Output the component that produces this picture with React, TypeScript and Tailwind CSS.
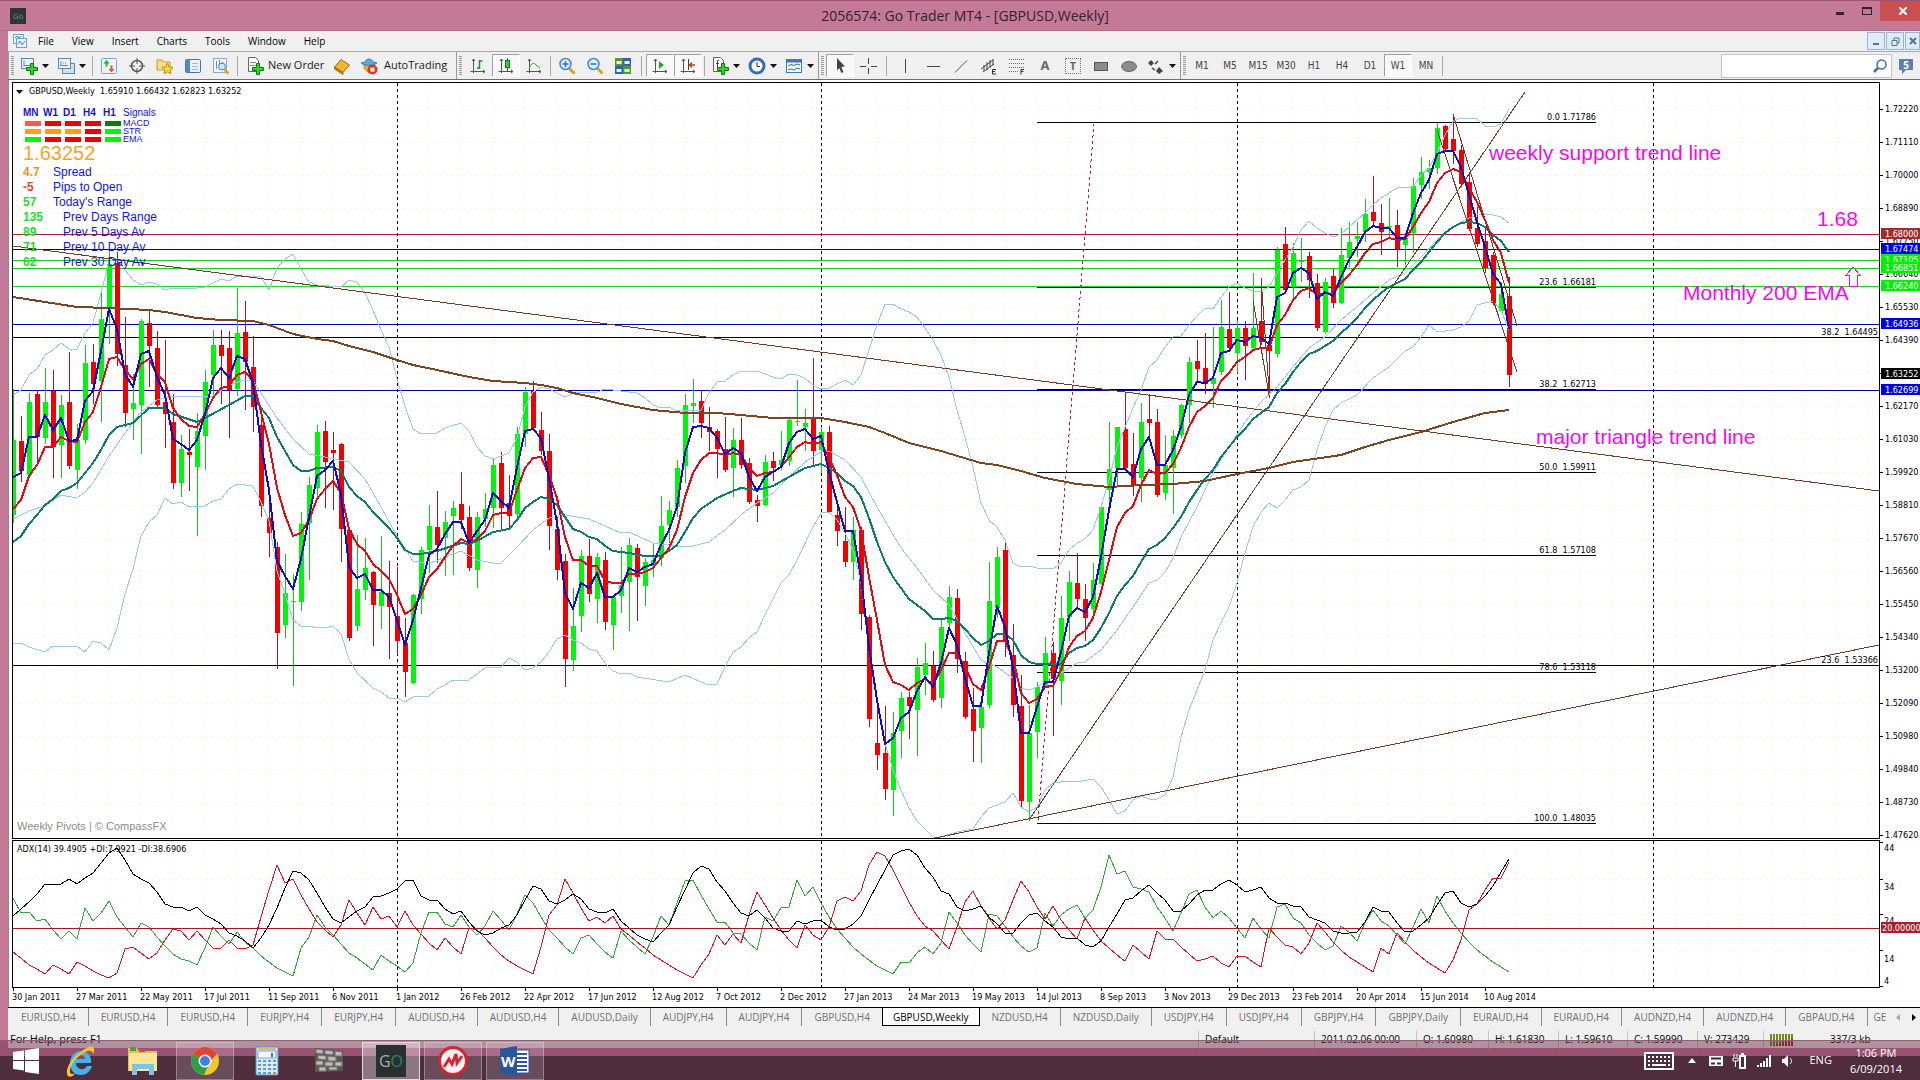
import type { ReactNode } from 'react'

const FONT_UI = "font-['Open_Sans','Noto_Sans',sans-serif]"
const FONT_CHART = "font-['DejaVu_Sans_Condensed','DejaVu_Sans',sans-serif]"
const FONT_LABEL = "font-['Liberation_Sans',Arial,sans-serif]"

// Bars are 8px apart and the first one sits on the left frame
const BAR_START = 13
const BAR_STEP = 8
const barX = (i: number) => BAR_START + i * BAR_STEP

// high, body top, body bottom, low, 1 = bullish
type Candle = [number, number, number, number, number]

const CANDLES: Candle[] = [
  [389, 440, 515, 523, 1], [416, 441, 471, 482, 0], [393, 402, 475, 476, 1], [390, 394, 437, 461, 0],
  [368, 402, 438, 444, 1], [370, 391, 447, 478, 0], [395, 405, 445, 478, 1], [352, 402, 466, 469, 0],
  [424, 440, 470, 489, 1], [345, 363, 440, 444, 1], [344, 362, 384, 404, 0], [293, 319, 381, 422, 1],
  [249, 264, 308, 344, 1], [252, 263, 354, 366, 0], [317, 365, 413, 427, 0], [374, 403, 409, 440, 1],
  [319, 321, 405, 454, 1], [310, 323, 346, 387, 0], [331, 348, 405, 407, 0], [340, 402, 414, 448, 0],
  [394, 422, 483, 489, 0], [435, 449, 483, 497, 1], [429, 452, 455, 491, 0], [413, 431, 467, 536, 1],
  [370, 382, 436, 470, 1], [330, 345, 375, 395, 1], [330, 345, 356, 404, 0], [331, 348, 390, 438, 0],
  [288, 333, 389, 396, 1], [301, 332, 362, 410, 0], [336, 367, 407, 432, 0], [408, 425, 506, 517, 0],
  [502, 518, 533, 557, 0], [542, 547, 633, 669, 0], [554, 593, 625, 638, 1], [574, 601, 602, 686, 1],
  [512, 524, 602, 611, 1], [477, 485, 523, 580, 1], [425, 432, 488, 498, 1], [421, 431, 462, 508, 0],
  [432, 450, 453, 510, 0], [443, 444, 529, 562, 0], [530, 530, 638, 641, 0], [535, 589, 626, 631, 1],
  [538, 568, 590, 600, 1], [571, 572, 605, 646, 0], [536, 592, 606, 629, 1], [561, 593, 607, 659, 0],
  [567, 616, 641, 655, 0], [618, 643, 672, 697, 0], [594, 595, 683, 684, 1], [547, 550, 599, 614, 1],
  [505, 526, 550, 573, 1], [491, 527, 545, 563, 0], [511, 522, 538, 576, 1], [501, 508, 516, 575, 1],
  [472, 504, 520, 529, 0], [506, 517, 568, 571, 0], [512, 517, 570, 588, 1], [493, 509, 519, 527, 1],
  [459, 465, 508, 528, 1], [452, 463, 508, 530, 0], [475, 503, 516, 529, 0], [427, 434, 514, 518, 1],
  [387, 392, 434, 447, 1], [381, 391, 428, 429, 0], [412, 430, 451, 455, 0], [434, 451, 526, 550, 0],
  [517, 529, 570, 580, 0], [554, 561, 659, 687, 0], [588, 626, 660, 671, 1], [550, 556, 616, 632, 1],
  [539, 556, 594, 602, 0], [553, 557, 599, 623, 1], [552, 560, 622, 630, 0], [597, 597, 625, 650, 1],
  [547, 585, 596, 613, 1], [538, 545, 582, 631, 1], [544, 548, 577, 621, 0], [558, 562, 586, 606, 1],
  [544, 560, 566, 577, 1], [496, 526, 558, 566, 1], [501, 510, 525, 543, 1], [460, 468, 507, 517, 1],
  [394, 405, 466, 483, 1], [379, 403, 406, 423, 1], [391, 401, 423, 438, 0], [407, 427, 432, 451, 0],
  [429, 431, 449, 478, 0], [417, 449, 470, 472, 0], [428, 440, 468, 497, 1], [418, 440, 465, 469, 0],
  [458, 463, 502, 504, 0], [495, 500, 506, 522, 0], [455, 462, 505, 506, 1], [452, 461, 468, 481, 0],
  [431, 460, 465, 470, 1], [418, 420, 461, 466, 1], [380, 421, 422, 426, 1], [409, 423, 427, 451, 1],
  [358, 418, 451, 466, 0], [427, 432, 450, 473, 1], [426, 432, 512, 513, 0], [500, 515, 531, 546, 0],
  [507, 541, 562, 567, 0], [517, 530, 562, 580, 1], [527, 530, 614, 630, 0], [615, 617, 719, 727, 0],
  [707, 743, 755, 770, 0], [706, 753, 789, 800, 0], [712, 733, 790, 816, 1], [692, 698, 731, 758, 1],
  [692, 697, 706, 739, 0], [658, 667, 710, 756, 1], [643, 663, 675, 695, 1], [651, 666, 700, 702, 0],
  [620, 627, 698, 708, 1], [586, 597, 623, 628, 1], [589, 598, 659, 673, 0], [652, 661, 717, 719, 0],
  [688, 709, 731, 762, 0], [706, 707, 728, 763, 1], [562, 601, 705, 708, 1], [547, 557, 608, 618, 1],
  [543, 550, 642, 657, 0], [624, 655, 705, 717, 0], [675, 706, 801, 808, 0], [705, 733, 802, 821, 1],
  [682, 687, 732, 758, 1], [637, 653, 686, 688, 1], [642, 653, 679, 736, 0], [596, 618, 681, 705, 1],
  [571, 582, 617, 641, 1], [553, 583, 599, 607, 0], [584, 599, 618, 641, 0], [563, 580, 609, 614, 1],
  [504, 507, 584, 585, 1], [422, 469, 490, 507, 1], [427, 427, 468, 485, 1], [392, 429, 468, 470, 0],
  [433, 464, 486, 496, 0], [403, 422, 478, 502, 1], [394, 419, 423, 438, 0], [409, 422, 495, 497, 0],
  [435, 465, 493, 500, 1], [430, 436, 468, 514, 1], [404, 405, 435, 438, 1], [357, 362, 405, 423, 1],
  [340, 361, 369, 383, 0], [333, 368, 384, 394, 0], [327, 378, 384, 408, 1], [300, 327, 372, 375, 1],
  [292, 329, 348, 352, 0], [320, 328, 353, 373, 1], [321, 328, 346, 380, 0], [273, 328, 348, 349, 1],
  [287, 321, 342, 345, 0], [340, 345, 351, 398, 0], [247, 250, 354, 357, 1], [227, 244, 290, 293, 0],
  [243, 253, 287, 298, 1], [238, 261, 262, 282, 1], [252, 256, 280, 298, 0], [274, 283, 328, 331, 0],
  [278, 282, 332, 334, 1], [269, 276, 303, 308, 0], [228, 255, 303, 304, 1], [222, 242, 258, 267, 1],
  [222, 236, 239, 257, 1], [199, 214, 232, 242, 1], [176, 212, 221, 225, 0], [204, 223, 232, 255, 0],
  [198, 226, 227, 238, 1], [210, 225, 249, 267, 0], [233, 238, 245, 265, 1], [178, 186, 233, 253, 1],
  [157, 172, 185, 199, 1], [160, 168, 172, 189, 1], [123, 128, 168, 174, 1], [125, 126, 149, 151, 0],
  [116, 139, 151, 164, 0], [145, 150, 184, 187, 0], [172, 182, 229, 231, 0], [207, 228, 244, 247, 0],
  [227, 241, 268, 273, 0], [252, 255, 303, 305, 0], [287, 294, 311, 313, 1], [277, 296, 375, 387, 0],
]

// One value per bar
const EMA_FAST = [
  477, 473, 437, 437, 415, 430, 418, 441, 440, 401, 391, 351, 309, 329, 374, 387, 354, 351, 377, 395,
  439, 444, 450, 440, 414, 378, 368, 378, 356, 359, 383, 444, 490, 561, 576, 589, 559, 517, 476, 470,
  461, 494, 567, 578, 574, 590, 590, 597, 620, 645, 620, 588, 555, 549, 534, 522, 522, 543, 531, 520,
  493, 501, 508, 467, 431, 429, 438, 478, 523, 593, 609, 583, 588, 573, 597, 597, 590, 568, 572, 567,
  564, 545, 530, 507, 453, 427, 426, 428, 438, 454, 448, 453, 477, 491, 477, 472, 467, 443, 432, 429,
  439, 436, 472, 502, 531, 531, 577, 647, 700, 744, 738, 718, 712, 691, 677, 687, 663, 628, 645, 678,
  706, 706, 653, 606, 627, 667, 733, 733, 707, 682, 682, 652, 616, 608, 612, 597, 557, 510, 469, 469,
  477, 449, 437, 465, 465, 450, 427, 395, 382, 383, 378, 353, 351, 340, 342, 336, 338, 344, 297, 293,
  273, 268, 273, 299, 292, 296, 277, 260, 247, 232, 226, 228, 228, 238, 238, 213, 193, 180, 154, 151,
  151, 167, 195, 222, 247, 274, 284, 329,
]

const EMA_MID = [
  509, 500, 476, 465, 447, 447, 437, 441, 442, 422, 412, 387, 359, 357, 370, 379, 364, 359, 374, 382,
  408, 419, 426, 427, 414, 398, 388, 386, 375, 372, 381, 412, 444, 488, 515, 536, 533, 520, 499, 489,
  481, 493, 529, 544, 551, 564, 571, 579, 595, 614, 609, 595, 577, 569, 557, 546, 539, 543, 539, 531,
  515, 513, 513, 490, 468, 458, 457, 475, 498, 537, 560, 560, 566, 566, 581, 583, 583, 574, 574, 572,
  568, 558, 548, 530, 497, 473, 460, 453, 453, 455, 453, 455, 468, 476, 473, 472, 467, 457, 447, 442,
  444, 442, 458, 475, 497, 507, 530, 577, 620, 665, 682, 685, 690, 683, 679, 684, 670, 653, 653, 667,
  684, 690, 667, 641, 641, 658, 693, 703, 699, 687, 686, 670, 647, 636, 631, 618, 592, 560, 527, 513,
  506, 485, 470, 474, 473, 464, 448, 427, 412, 406, 398, 381, 373, 362, 357, 350, 348, 348, 325, 315,
  300, 291, 288, 295, 293, 294, 283, 275, 265, 253, 244, 242, 238, 240, 239, 227, 213, 202, 183, 173,
  169, 172, 188, 202, 220, 240, 253, 283,
]

const ADX = [
  916, 909, 902, 894, 884, 884, 884, 879, 884, 878, 873, 863, 853, 848, 860, 874, 879, 883, 892, 904,
  907, 907, 911, 907, 915, 919, 924, 933, 936, 941, 948, 938, 925, 908, 888, 871, 873, 880, 893, 907,
  919, 923, 917, 911, 907, 897, 896, 893, 889, 881, 880, 896, 900, 900, 909, 914, 911, 922, 931, 935,
  933, 928, 925, 915, 900, 886, 889, 901, 904, 900, 894, 899, 909, 912, 913, 909, 921, 928, 935, 939,
  942, 933, 925, 907, 890, 873, 866, 869, 882, 891, 903, 913, 916, 910, 918, 928, 931, 931, 921, 924,
  921, 920, 927, 930, 929, 924, 916, 900, 885, 870, 855, 851, 849, 855, 868, 877, 891, 894, 907, 911,
  909, 906, 917, 924, 933, 933, 923, 915, 913, 921, 927, 937, 939, 938, 945, 947, 941, 927, 914, 900,
  898, 891, 885, 893, 900, 911, 911, 904, 895, 890, 890, 884, 880, 885, 892, 890, 887, 898, 903, 903,
  906, 907, 917, 920, 923, 931, 933, 933, 932, 922, 907, 911, 912, 923, 932, 931, 925, 918, 905, 893,
  891, 903, 907, 904, 896, 886, 872, 859,
]

const MINUS_DI = [
  952, 958, 965, 969, 974, 965, 969, 974, 962, 966, 971, 975, 978, 973, 949, 947, 953, 959, 953, 940,
  929, 931, 940, 931, 940, 948, 948, 940, 948, 949, 945, 917, 890, 865, 883, 879, 895, 909, 922, 930,
  937, 925, 900, 913, 925, 907, 919, 916, 927, 911, 925, 934, 943, 950, 938, 947, 954, 928, 930, 938,
  947, 955, 961, 966, 970, 974, 947, 915, 905, 879, 893, 908, 921, 917, 923, 916, 929, 935, 942, 948,
  955, 960, 965, 970, 974, 978, 965, 954, 935, 945, 934, 943, 915, 892, 905, 918, 930, 940, 948, 925,
  935, 940, 927, 901, 897, 901, 891, 865, 852, 856, 870, 886, 902, 916, 926, 931, 940, 949, 927, 902,
  891, 906, 918, 929, 920, 900, 881, 892, 907, 919, 906, 920, 930, 939, 918, 930, 941, 948, 955, 961,
  945, 952, 959, 931, 939, 939, 947, 954, 961, 959, 956, 963, 967, 956, 956, 962, 967, 928, 937, 945,
  947, 954, 943, 923, 932, 942, 950, 957, 962, 967, 972, 948, 954, 933, 942, 950, 957, 963, 968, 973,
  960, 940, 910, 904, 890, 878, 878, 862,
]

const PLUS_DI = [
  898, 913, 912, 921, 919, 930, 939, 931, 939, 908, 921, 913, 901, 917, 927, 937, 923, 927, 937, 946,
  954, 959, 961, 965, 948, 927, 936, 944, 932, 942, 948, 956, 962, 968, 972, 976, 948, 937, 915, 927,
  935, 944, 953, 958, 964, 970, 955, 961, 966, 972, 963, 933, 912, 912, 924, 927, 915, 927, 935, 926,
  911, 920, 930, 914, 895, 903, 917, 930, 938, 947, 954, 938, 935, 944, 952, 958, 931, 940, 947, 954,
  937, 916, 925, 903, 881, 880, 895, 909, 922, 922, 933, 934, 943, 950, 917, 921, 908, 907, 880, 896,
  887, 903, 917, 929, 938, 947, 954, 960, 966, 970, 974, 962, 963, 953, 947, 954, 943, 912, 923, 935,
  944, 952, 914, 916, 926, 937, 946, 952, 948, 913, 926, 915, 909, 905, 918, 910, 887, 855, 874, 871,
  887, 889, 892, 907, 918, 931, 913, 894, 890, 907, 918, 911, 918, 928, 938, 918, 929, 938, 907, 904,
  918, 923, 935, 943, 950, 946, 926, 932, 941, 923, 910, 921, 926, 935, 944, 927, 909, 923, 896, 911,
  923, 933, 942, 950, 956, 962, 967, 972,
]

// Smooth curves are kept as bar:value knots
const EMA_SLOW =
  '0:542 1:536 2:524 3:515 4:505 5:499 6:491 7:488 8:483 9:473 10:463 11:450 12:435 13:427 15:423 17:408 19:408 20:414 23:422 24:418 27:405 29:396 30:396 31:408 32:418 33:437 35:465 36:471 37:471 38:468 40:467 41:471 42:487 43:496 44:502 45:512 46:520 47:528 48:538 49:550 50:554 51:554 53:551 56:543 57:544 58:541 60:532 62:529 63:520 64:508 65:502 66:497 67:499 68:505 69:517 70:529 71:532 72:537 73:539 74:546 75:551 77:553 79:556 81:556 82:551 83:545 84:532 85:518 86:509 88:498 90:491 91:488 93:490 95:486 97:477 99:468 101:464 102:468 103:473 104:481 105:486 106:497 107:518 108:542 109:562 110:577 112:599 114:611 115:619 116:619 117:618 118:621 119:629 120:638 121:645 122:641 123:634 124:634 125:640 126:655 127:662 128:664 131:664 132:653 133:648 134:646 135:640 136:628 137:613 138:596 139:585 140:576 141:562 142:549 143:545 144:538 145:528 146:517 147:502 148:490 149:479 150:470 151:457 152:447 153:437 154:429 155:419 156:413 157:407 158:393 159:384 160:372 161:362 162:354 163:351 164:346 165:341 166:333 167:326 168:318 169:308 170:300 171:293 172:287 173:283 174:279 175:270 176:262 177:252 178:242 179:233 180:227 181:223 182:222 183:223 184:227 185:235 186:241 187:252'

const EMA_200 =
  '0:297 4:302 8:307 12:308 17:310 19:312 23:318 26:320 30:321 32:325 35:334 38:339 40:341 42:346 45:352 48:360 50:365 53:370 57:377 60:381 62:382 64:383 66:385 68:388 70:393 73:398 76:404 80:410 84:413 88:413 91:415 95:418 101:418 104:422 107:427 109:433 112:443 116:451 121:463 123:465 126:471 129:478 133:484 137:487 141:485 145:484 149:481 153:474 157:468 160:462 166:455 169:447 172:440 176:432 180:422 184:413 186:411 187:410'

const BAND_UPPER =
  '0:395 1:390 2:375 3:369 4:355 5:350 6:343 7:349 8:349 9:333 10:323 11:293 12:261 13:259 14:270 15:280 16:285 17:282 18:284 19:290 20:288 23:288 24:287 26:279 27:281 28:276 31:277 32:290 33:268 34:259 35:254 36:269 37:282 38:285 41:287 42:280 43:282 44:293 45:310 46:330 47:347 48:379 49:406 50:429 51:434 53:433 54:428 56:423 57:431 58:447 59:456 60:459 61:456 62:453 63:438 64:407 65:392 66:387 67:389 69:397 70:393 73:392 74:389 78:393 79:398 80:405 81:408 82:407 83:411 86:410 87:393 88:382 89:381 90:375 91:371 93:371 95:377 96:379 97:374 98:375 99:378 100:385 101:389 102:388 103:384 104:380 105:385 106:375 107:350 108:325 109:304 110:304 111:309 112:312 113:317 114:328 115:340 116:355 117:377 118:410 119:437 120:467 121:503 122:520 123:527 124:540 125:563 126:567 127:566 128:568 130:569 131:563 132:550 133:543 134:539 135:530 136:507 137:480 138:447 139:427 140:408 141:390 142:367 143:360 144:347 145:337 146:336 147:325 148:316 149:308 150:309 151:297 152:287 153:283 154:288 155:291 156:291 157:287 158:273 159:260 160:247 161:230 162:221 163:228 164:233 165:237 166:234 167:227 168:220 169:213 170:205 171:198 172:193 173:188 175:187 176:175 177:168 178:153 179:135 180:121 181:118 182:118 183:119 184:126 185:127 186:124 187:109'

const BAND_MIDDLE =
  '0:519 2:511 4:506 6:495 8:498 9:492 10:483 12:456 14:433 16:412 18:400 20:396 22:397 25:396 27:385 29:380 30:381 31:393 33:418 35:439 37:454 39:457 42:462 44:479 46:507 48:536 50:561 52:564 54:557 56:551 58:560 60:563 61:563 63:547 65:530 67:518 69:515 72:519 76:533 77:532 80:543 83:546 85:546 87:542 89:530 91:515 93:503 95:493 97:477 99:462 101:452 102:451 104:460 106:477 108:507 111:548 113:568 115:590 117:605 119:633 121:660 123:667 125:678 126:688 127:690 128:687 129:682 130:682 131:673 133:663 134:662 136:650 138:630 140:607 142:583 143:580 144:572 145:558 146:537 148:507 150:473 152:447 154:422 156:402 158:387 160:367 162:348 164:337 166:320 168:307 170:293 172:280 174:273 176:257 178:240 180:227 181:222 182:218 183:215 184:214 185:215 186:217 187:223'

const BAND_LOWER =
  '0:644 1:643 2:647 4:652 5:646 8:646 9:652 10:641 11:643 12:650 13:628 14:594 15:569 16:536 17:522 18:515 19:498 20:504 21:502 22:507 24:506 25:501 26:499 27:489 28:484 30:486 31:502 32:521 33:571 34:594 35:620 36:626 39:628 40:626 41:634 42:659 43:673 45:688 46:692 47:698 48:698 49:702 50:697 52:696 53:689 54:685 55:680 57:680 59:668 61:667 62:658 63:662 64:670 65:668 66:662 67:652 68:639 69:635 70:640 71:643 72:649 73:651 74:663 75:671 76:674 77:673 78:677 82:682 84:675 86:682 87:685 88:684 89:667 90:652 91:647 92:638 93:632 94:615 96:583 97:575 98:560 100:527 101:513 102:512 103:520 104:533 105:550 106:583 107:650 108:697 109:743 110:770 111:790 112:808 113:821 115:837 116:837 118:832 120:829 121:817 122:808 124:802 125:793 126:807 127:812 128:807 129:790 130:783 132:781 133:782 135:779 136:787 137:800 138:814 139:811 140:800 141:796 142:799 143:799 144:795 145:777 146:737 147:710 148:690 149:670 150:640 151:623 152:607 153:583 154:553 155:527 156:512 157:503 158:508 159:500 160:490 161:487 162:480 163:450 164:427 165:410 166:403 168:395 170:378 172:367 174:351 175:347 176:337 177:325 178:332 180:330 181:327 182:321 183:305 185:301 186:310 187:330'

const perBar = (values: number[]) => values.map((v, i) => `${barX(i)},${v}`).join(' ')

const knots = (text: string) =>
  text
    .split(' ')
    .map((pair) => pair.split(':'))
    .map(([i, v]) => `${barX(Number(i))},${v}`)
    .join(' ')

const YEAR_LINES = [397, 821, 1237, 1653]

const PRICE_TICKS = [
  '1.72220', '1.71110', '1.70000', '1.68890', '1.67750', '1.66640', '1.65530', '1.64390', '', '1.62170', '1.61030', '1.59920',
  '1.58810', '1.57670', '1.56560', '1.55450', '1.54340', '1.53200', '1.52090', '1.50980', '1.49840', '1.48730', '1.47620',
]
const tickY = (i: number) => 109 + i * 33

const LEVELS = [
  { y: 234, price: '1.68000', color: '#a5203a', tag: '#a52a2a' },
  { y: 249, price: '1.67474', color: '#00009c', tag: '#0000e6' },
  { y: 260, price: '1.67105', color: '#22c822', tag: '#00f000' },
  { y: 268, price: '1.66851', color: '#22c822', tag: '#00f000' },
  { y: 286, price: '1.66240', color: '#22d822', tag: '#00f000' },
  { y: 324, price: '1.64936', color: '#00009c', tag: '#0000e6' },
  { y: 374, price: '1.63252', color: '', tag: '#000000' },
  { y: 390, price: '1.62699', color: '#00009c', tag: '#0000e6' },
]

const FIBS = [
  { y: 122, text: '0.0 1.71786' },
  { y: 287, text: '23.6  1.66181' },
  { y: 389, text: '38.2  1.62713' },
  { y: 472, text: '50.0  1.59911' },
  { y: 555, text: '61.8  1.57108' },
  { y: 672, text: '78.6  1.53118' },
  { y: 823, text: '100.0  1.48035' },
]

const DATES = [
  '30 Jan 2011', '27 Mar 2011', '22 May 2011', '17 Jul 2011', '11 Sep 2011', '6 Nov 2011', '1 Jan 2012', '26 Feb 2012',
  '22 Apr 2012', '17 Jun 2012', '12 Aug 2012', '7 Oct 2012', '2 Dec 2012', '27 Jan 2013', '24 Mar 2013', '19 May 2013',
  '14 Jul 2013', '8 Sep 2013', '3 Nov 2013', '29 Dec 2013', '23 Feb 2014', '20 Apr 2014', '15 Jun 2014', '10 Aug 2014',
]

const TABS = [
  'EURUSD,H4', 'EURUSD,H4', 'EURUSD,H4', 'EURJPY,H4', 'EURJPY,H4', 'AUDUSD,H4', 'AUDUSD,H4', 'AUDUSD,Daily', 'AUDJPY,H4',
  'AUDJPY,H4', 'GBPUSD,H4', 'GBPUSD,Weekly', 'NZDUSD,H4', 'NZDUSD,Daily', 'USDJPY,H4', 'USDJPY,H4', 'GBPJPY,H4',
  'GBPJPY,Daily', 'EURAUD,H4', 'EURAUD,H4', 'AUDNZD,H4', 'AUDNZD,H4', 'GBPAUD,H4',
]
const ACTIVE_TAB = 11

/* ---------- toolbar pieces ---------- */

function Caret() {
  return (
    <svg width="7" height="4" viewBox="0 0 7 4" className="shrink-0">
      <path d="M0 0h7L3.5 4z" fill="#111" />
    </svg>
  )
}

function Sep({ className = 'mx-0.5' }: { className?: string }) {
  return <span className={`h-5 w-px shrink-0 bg-[#a8a8a8] ${className}`} />
}

function Grip() {
  return (
    <span className="flex h-full shrink-0 items-center border-l border-[#9a9a9a] px-0.5">
      <span className="h-5 w-[3px] bg-[repeating-linear-gradient(#9a9a9a_0_1px,transparent_1px_2px)]" />
    </span>
  )
}

function Tool({ label, pressed, children }: { label: string; pressed?: boolean; children: ReactNode }) {
  return (
    <button
      type="button"
      aria-label={label}
      className={`flex h-[23px] w-7 shrink-0 items-center justify-center ${
        pressed ? 'border border-[#a0a0a0] border-b-white border-r-white bg-[#f9f9f9]' : ''
      }`}
    >
      {children}
    </button>
  )
}

function MenuTool({ label, children }: { label: string; children: ReactNode }) {
  return (
    <button type="button" aria-label={label} className="flex h-[23px] w-[37px] shrink-0 items-center gap-1 pl-1">
      {children}
      <Caret />
    </button>
  )
}

function Icon({ children, size = 18 }: { children: ReactNode; size?: number }) {
  return (
    <svg width={size} height={size} viewBox="0 0 18 18" fill="none" className="shrink-0">
      {children}
    </svg>
  )
}

function GreenPlus() {
  return <path d="M10.5 6.5h3v4h4v3h-4v4h-3v-4h-4v-3h4z" fill="#2fd52f" stroke="#0b7a0b" />
}

function Magnifier({ plus }: { plus?: boolean }) {
  return (
    <Icon>
      <path d="M11.5 11.5l5 5" stroke="#d9a520" strokeWidth="3" />
      <circle cx="7.5" cy="7" r="5.5" fill="#dff1ff" stroke="#3f86c6" strokeWidth="1.5" />
      <path d={plus ? 'M4.5 7h6M7.5 4v6' : 'M4.5 7h6'} stroke="#2a6fb0" strokeWidth="1.5" />
    </Icon>
  )
}

function Axes() {
  return <path d="M4.5 2v14M1.5 14.5H16M3 4l1.5-2L6 4M14 13l2 1.5-2 1.5" stroke="#555" />
}

function Toolbar() {
  return (
    <div className="flex h-[29px] items-center border-b border-t border-b-[#6e6e6e] border-t-[#a9a9a9] bg-[#f0f0f0] text-[11px] text-[#1a1a1a]">
      <Grip />
      <MenuTool label="New chart">
        <Icon>
          <rect x="1.5" y="1.5" width="12" height="10" fill="#eaf4fd" stroke="#5b87b5" />
          <path d="M4 3.5v6M4 8.5h8" stroke="#5b87b5" />
          <GreenPlus />
        </Icon>
      </MenuTool>
      <MenuTool label="Profiles">
        <Icon>
          <rect x="5.5" y="6.5" width="12" height="10" fill="#cfe0f2" stroke="#5b87b5" />
          <rect x="1.5" y="1.5" width="12" height="10" fill="#eaf4fd" stroke="#5b87b5" />
          <path d="M4 4v5M3 8.5h8M6 6h1M8 6h1" stroke="#5b87b5" />
        </Icon>
      </MenuTool>
      <Sep />
      <Tool label="Market Watch">
        <Icon>
          <rect x="1.5" y="1.5" width="15" height="15" rx="1" fill="#e8f3fd" stroke="#7aa7d4" />
          <path d="M6.5 3l3 3.5h-2v3h-2v-3h-2z" fill="#22b422" />
          <path d="M11.5 15.5l-3-3.5h2V8.5h2V12h2z" fill="#e8542a" />
        </Icon>
      </Tool>
      <Tool label="Data Window">
        <Icon>
          <circle cx="9" cy="9" r="5.5" stroke="#555" strokeWidth="1.5" />
          <path d="M9 1v6M9 11v6M1 9h6M11 9h6" stroke="#555" />
        </Icon>
      </Tool>
      <Tool label="Navigator">
        <Icon>
          <path d="M1 3h5l1.5 2H14v8H1z" fill="#f7df84" stroke="#c79a2a" />
          <path d="M11.5 6.5l1.7 3.4 3.8.5-2.7 2.6.7 3.7-3.5-1.8L8 16.7l.7-3.7L6 10.4l3.8-.5z" fill="#ffd83c" stroke="#c08a10" />
        </Icon>
      </Tool>
      <Tool label="Terminal">
        <Icon>
          <rect x="1.5" y="2.5" width="15" height="13" rx="1" fill="#eaf4fd" stroke="#3d79b5" />
          <rect x="2" y="3" width="4" height="12" fill="#4a8cca" />
          <path d="M8 6.5h6M8 9.5h6M8 12.5h6" stroke="#9dbbd8" />
        </Icon>
      </Tool>
      <Tool label="Strategy Tester">
        <Icon>
          <rect x="1.5" y="1.5" width="13" height="14" fill="#f2f8fd" stroke="#8aa9c8" />
          <path d="M4.5 4v8M7.5 3v7M10.5 5v6" stroke="#6b8fb5" />
          <circle cx="10" cy="9.5" r="3.5" fill="#cbe6fb" stroke="#3f86c6" />
          <path d="M12.5 12.5l4 4" stroke="#d9a520" strokeWidth="2.5" />
        </Icon>
      </Tool>
      <Sep />
      <button type="button" className="flex h-[23px] w-[88px] shrink-0 items-center gap-1 whitespace-nowrap pl-1.5">
        <Icon>
          <path d="M2.5.5h7l3 3v11h-10z" fill="#fff" stroke="#666" />
          <path d="M4 5.5h6M4 8.5h5" stroke="#888" />
          <GreenPlus />
        </Icon>
        New Order
      </button>
      <Tool label="MetaEditor">
        <Icon>
          <path d="M1.5 10L8 2.5 16.5 8 10 15.5z" fill="#efb62f" stroke="#9a6d10" />
          <path d="M1.5 10l8.5 5.5v2L1.5 12z" fill="#c78a18" stroke="#9a6d10" />
        </Icon>
      </Tool>
      <button type="button" className="flex h-[23px] w-[100px] shrink-0 items-center gap-1.5 whitespace-nowrap pl-1">
        <Icon>
          <path d="M1 6c3 3 13 3 16 0l-4-1C12 1 6 1 5 5z" fill="#57ace4" stroke="#2f7db5" />
          <path d="M4 8.5c0 3 2 6 5 7l4-7z" fill="#e8b830" stroke="#b08314" />
          <circle cx="12.5" cy="12.5" r="5" fill="#d93a1c" />
          <rect x="10.5" y="10.5" width="4" height="4" fill="#fff" />
        </Icon>
        AutoTrading
      </button>
      <Grip />
      <Tool label="Bar chart">
        <Icon>
          <Axes />
          <path d="M10.5 3v9M10.5 4h3M8 11h2.5" stroke="#2a8a2a" strokeWidth="1.5" />
        </Icon>
      </Tool>
      <Tool label="Candlesticks" pressed>
        <Icon>
          <Axes />
          <path d="M10.5 1v13" stroke="#0b7a0b" />
          <rect x="8.5" y="3.5" width="4" height="7" fill="#2fd52f" stroke="#0b7a0b" />
        </Icon>
      </Tool>
      <Tool label="Line chart">
        <Icon>
          <Axes />
          <path d="M4 12c2-6 5-7 7-4l4 3" stroke="#3a943a" />
        </Icon>
      </Tool>
      <Sep />
      <Tool label="Zoom in"><Magnifier plus /></Tool>
      <Tool label="Zoom out"><Magnifier /></Tool>
      <Tool label="Tile windows">
        <Icon>
          <rect x="1" y="1" width="8" height="8" fill="#4d9c2d" />
          <rect x="9" y="1" width="8" height="8" fill="#2f62b5" />
          <rect x="1" y="9" width="8" height="8" fill="#2f62b5" />
          <rect x="9" y="9" width="8" height="8" fill="#4d9c2d" />
          <path d="M2.5 4h5v3h-5zM10.5 4h5v3h-5zM2.5 12h5v3h-5zM10.5 12h5v3h-5z" fill="#eef4e8" />
        </Icon>
      </Tool>
      <Sep className="mx-1" />
      <Tool label="Auto scroll" pressed>
        <Icon>
          <Axes />
          <path d="M8 4l5 4-5 4z" fill="#22a822" />
        </Icon>
      </Tool>
      <Tool label="Chart shift" pressed>
        <Icon>
          <Axes />
          <path d="M9.5 2v11" stroke="#444" />
          <path d="M16 8h-5M13 5.5L10.5 8l2.5 2.5" stroke="#b5401c" strokeWidth="1.5" />
        </Icon>
      </Tool>
      <Sep />
      <MenuTool label="Indicators">
        <Icon>
          <path d="M2.5.5h7l3 3v11h-10z" fill="#fff" stroke="#666" />
          <path d="M8 3.5H6.5v7M5 6.5h3" stroke="#444" />
          <GreenPlus />
        </Icon>
      </MenuTool>
      <MenuTool label="Periods">
        <Icon>
          <circle cx="9" cy="9" r="7" fill="#fff" stroke="#2c6fbb" strokeWidth="3" />
          <path d="M9 5v4.5h3" stroke="#333" />
        </Icon>
      </MenuTool>
      <MenuTool label="Templates">
        <Icon>
          <rect x="1.5" y="2.5" width="15" height="13" fill="#f2f8fd" stroke="#3d79b5" />
          <path d="M1 4h16" stroke="#3d79b5" strokeWidth="3" />
          <path d="M3 9l3-1.5 3 1 3-1.5 3 1M3 13l3-1 3 1 3-2 3 1" stroke="#2f7d4f" />
        </Icon>
      </MenuTool>
      <Grip />
      <Tool label="Cursor" pressed>
        <Icon>
          <path d="M6 1l8 8.5-3.7.4L12.5 15l-2.2 1-2-5L6 13.5z" fill="#444" />
        </Icon>
      </Tool>
      <Tool label="Crosshair">
        <Icon><path d="M9.5 1v6M9.5 11v6M1 9.5h6M12 9.5h6" stroke="#444" /></Icon>
      </Tool>
      <Sep className="mx-1" />
      <Tool label="Vertical line"><Icon><path d="M9.5 2v14" stroke="#444" /></Icon></Tool>
      <Tool label="Horizontal line"><Icon><path d="M3 9.5h13" stroke="#444" /></Icon></Tool>
      <Tool label="Trendline"><Icon><path d="M3 15.5L15 3.5" stroke="#555" /></Icon></Tool>
      <Tool label="Equidistant channel">
        <Icon>
          <path d="M1 12l12-9M3 15l11-8M4 8v6M7 5v8M10 3v8M13 2v6" stroke="#444" />
          <path d="M16 12.5h-3.5v4.5H16M12.5 14.5H15" stroke="#333" />
        </Icon>
      </Tool>
      <Tool label="Fibonacci retracement">
        <Icon>
          <path d="M1 2.5h16M1 6.5h16M1 10.5h16M1 14.5h10" stroke="#666" strokeDasharray="1 1" />
          <path d="M16 12.5h-3v5M13 14.5h2.5" stroke="#333" />
        </Icon>
      </Tool>
      <Tool label="Text"><span className="text-[13px] font-bold text-[#666]">A</span></Tool>
      <Tool label="Text label">
        <span className="flex size-4 items-center justify-center border border-dotted border-[#777] text-[11px] font-bold leading-none text-[#666]">T</span>
      </Tool>
      <Tool label="Rectangle"><Icon><rect x="2.5" y="5.5" width="13" height="8" fill="#8c8c8c" stroke="#555" /></Icon></Tool>
      <Tool label="Ellipse"><Icon><ellipse cx="9" cy="9.5" rx="7.5" ry="5" fill="#8c8c8c" stroke="#666" /></Icon></Tool>
      <MenuTool label="Arrows">
        <Icon>
          <path d="M4 3l3 3-3 3-3-3zM12 10l4 4-4 3-3-3z" fill="#444" />
          <path d="M11 4l-3 3M5 11l3 2" stroke="#444" strokeWidth="1.5" />
        </Icon>
      </MenuTool>
      <Grip />
      {['M1', 'M5', 'M15', 'M30', 'H1', 'H4', 'D1', 'W1', 'MN'].map((tf) => (
        <Tool key={tf} label={tf} pressed={tf === 'W1'}>
          <span className={`${FONT_CHART} text-[10px] text-[#444]`}>{tf}</span>
        </Tool>
      ))}
      <Sep />
      <label className="ml-auto flex h-6 w-[171px] items-center border border-[#c4c4c4] bg-white pr-1">
        <input type="text" aria-label="Search" className="min-w-0 flex-1 bg-transparent px-1 outline-none" />
        <svg width="14" height="14" viewBox="0 0 14 14" fill="none">
          <circle cx="8.5" cy="5.5" r="4.5" stroke="#3c6fae" strokeWidth="1.5" />
          <path d="M5 9l-4 4" stroke="#3c6fae" strokeWidth="2.5" />
        </svg>
      </label>
      <button type="button" aria-label="5 messages" className="relative flex h-6 w-7 items-center justify-center">
        <svg width="16" height="16" viewBox="0 0 16 16" className="absolute">
          <path d="M1 1h14v11H8l-4 4v-4H1z" fill="#5d80ad" />
        </svg>
        <span className="relative pb-0.5 text-[10px] font-bold leading-none text-white">5</span>
      </button>
    </div>
  )
}

/* ---------- window chrome ---------- */

function TitleBar() {
  return (
    <header className="relative flex h-[31px] items-center justify-center border-y border-b-[#b06c88] border-t-[#9c5674] pl-2.5 text-[#36202b]">
      <span className="absolute left-2.5 flex h-4 w-4 items-center justify-center bg-[#303436] text-[8px] text-[#5a9c7a]">Go</span>
      <h1 className="text-[14px]">2056574: Go Trader MT4 - [GBPUSD,Weekly]</h1>
      <div className="absolute right-0 top-0 flex h-5">
        <button type="button" aria-label="Minimize" className="flex w-[27px] items-end justify-center pb-1.5">
          <span className="h-[3px] w-2 bg-[#36202b]" />
        </button>
        <button type="button" aria-label="Maximize" className="flex w-[27px] items-center justify-center">
          <span className="h-2 w-2.5 border border-t-2 border-[#36202b]" />
        </button>
        <button type="button" aria-label="Close" className="flex w-10 items-center justify-center bg-[#c75050] pl-1.5">
          <svg width="8" height="8" viewBox="0 0 8 8"><path d="M0 0l8 8M8 0L0 8" stroke="#fff" strokeWidth="2" /></svg>
        </button>
      </div>
    </header>
  )
}

function MenuBar() {
  const mdi = 'flex h-[18px] items-center justify-center border border-[#9db4d0] bg-[#dfebf7]'
  return (
    <nav className="flex h-5 items-center bg-[#f0f0f0] text-[10px] text-black">
      <svg width="16" height="16" viewBox="0 0 16 16" fill="none" className="ml-1 mr-2.5">
        <rect x="1.5" y="1.5" width="10" height="9" fill="#eaf4fd" stroke="#6fa0d0" />
        <rect x="4.5" y="5.5" width="10" height="9" fill="#eaf4fd" stroke="#6fa0d0" />
        <path d="M3 5l2-2 2 2 2-2M6 11l2-3 2 4 3-4" stroke="#4a86c0" />
      </svg>
      {['File', 'View', 'Insert', 'Charts', 'Tools', 'Window', 'Help'].map((item) => (
        <button key={item} type="button" className="mr-[18px]">
          {item}
        </button>
      ))}
      <div className="ml-auto flex gap-px">
        <button type="button" aria-label="Minimize chart" className={`${mdi} w-[18px]`}>
          <span className="mt-1.5 h-0.5 w-1.5 bg-[#5b708c]" />
        </button>
        <button type="button" aria-label="Restore chart" className={`${mdi} w-[18px]`}>
          <svg width="9" height="9" viewBox="0 0 9 9" fill="none"><path d="M3 3V1h5v5H6M1 3.5h5v5H1z" stroke="#5b708c" /></svg>
        </button>
        <button type="button" aria-label="Close chart" className={`${mdi} w-[15px]`}>
          <svg width="8" height="8" viewBox="0 0 8 8"><path d="M1 1l6 6M7 1L1 7" stroke="#5b708c" strokeWidth="2" /></svg>
        </button>
      </div>
    </nav>
  )
}

/* ---------- charts ---------- */

function Grid({ top, bottom, rows }: { top: number; bottom: number; rows: number[] }) {
  return (
    <g stroke="#f5f4ef" strokeDasharray="3 3">
      {Array.from({ length: 58 }, (_, i) => (
        <line key={i} x1={45 + i * 32} x2={45 + i * 32} y1={top} y2={bottom} />
      ))}
      {rows.map((y) => (
        <line key={y} x1="13" x2="4000" y1={y} y2={y} />
      ))}
    </g>
  )
}

function YearLines({ top, bottom }: { top: number; bottom: number }) {
  return (
    <g stroke="#000" strokeDasharray="3 3">
      {YEAR_LINES.map((x) => (
        <line key={x} x1={x} x2={x} y1={top} y2={bottom} />
      ))}
    </g>
  )
}

function SignalPanel() {
  const rows = [
    { name: 'MACD', cells: ['bg-[#ff5a48]', 'bg-[#f00000]', 'bg-[#f00000]', 'bg-[#f00000]', 'bg-[#008000]'] },
    { name: 'STR', cells: ['bg-[#ff9f0e]', 'bg-[#ff9f0e]', 'bg-[#ff9f0e]', 'bg-[#f00000]', 'bg-[#00f800]'] },
    { name: 'EMA', cells: ['bg-[#00f800]', 'bg-[#f00000]', 'bg-[#f00000]', 'bg-[#f00000]', 'bg-[#00f800]'] },
  ]
  const stats = [
    { value: '4.7', label: 'Spread', color: 'text-[#f39020]', width: 'w-[30px]' },
    { value: '-5', label: 'Pips to Open', color: 'text-[#ee4422]', width: 'w-[30px]' },
    { value: '57', label: "Today's Range", color: 'text-[#1fdd2c]', width: 'w-[30px]' },
    { value: '135', label: 'Prev Days Range', color: 'text-[#1fdd2c]', width: 'w-10' },
    { value: '89', label: 'Prev 5 Days Av', color: 'text-[#1fdd2c]', width: 'w-10' },
    { value: '71', label: 'Prev 10 Day Av', color: 'text-[#1fdd2c]', width: 'w-10' },
    { value: '62', label: 'Prev 30 Day Av', color: 'text-[#1fdd2c]', width: 'w-10' },
  ]
  return (
    <div className={`absolute left-2.5 top-[23px] text-[#1414d8] ${FONT_LABEL}`}>
      <div className="flex h-[13px] items-center text-[10px]">
        {['MN', 'W1', 'D1', 'H4', 'H1'].map((tf) => (
          <span key={tf} className="w-5 font-bold">{tf}</span>
        ))}
        <span>Signals</span>
      </div>
      {rows.map((row) => (
        <div key={row.name} className="flex h-2 items-center text-[9px] leading-none">
          {row.cells.map((cell, i) => (
            <span key={i} className="w-5 pl-0.5">
              <span className={`block h-[5px] w-4 ${cell}`} />
            </span>
          ))}
          <span>{row.name}</span>
        </div>
      ))}
      <div className="text-[20px] leading-[21px] text-[#f5a51d]">1.63252</div>
      {stats.map((s) => (
        <div key={s.label} className="flex h-[15px] items-center text-[12px]">
          <span className={`font-bold ${s.width} ${s.color}`}>{s.value}</span>
          <span>{s.label}</span>
        </div>
      ))}
    </div>
  )
}

function PriceChart() {
  return (
    <div className="flex">
      <div className="relative h-[757px] min-w-0 flex-1 overflow-hidden border border-black bg-white">
        <svg width="100%" height="755" className={`block ${FONT_CHART}`}>
          <g transform="translate(-13 -83)" shapeRendering="crispEdges" fill="none">
            <Grid top={83} bottom={838} rows={PRICE_TICKS.map((_, i) => tickY(i))} />
            <YearLines top={83} bottom={838} />

            {/* horizontal levels */}
            {LEVELS.filter((l) => l.color).map((l) => (
              <line key={l.price} x1="13" x2="4000" y1={l.y} y2={l.y} stroke={l.color} />
            ))}
            <line x1="13" x2="4000" y1="337" y2="337" stroke="#000" />
            <line x1="13" x2="4000" y1="665" y2="665" stroke="#000" />
            {FIBS.map((f) => (
              <line key={f.y} x1="1037" x2="1596" y1={f.y} y2={f.y} stroke="#000" />
            ))}

            {/* candles */}
            {CANDLES.map(([high, top, bottom, low, up], i) => (
              <g key={i} fill={up ? '#00f50a' : '#f00000'}>
                <rect x={barX(i)} y={high} width="1" height={low - high} fill={up ? '#12c81c' : '#c40c18'} />
                <rect x={barX(i) - 2} y={top} width="5" height={Math.max(1, bottom - top)} />
              </g>
            ))}

            {/* bands and averages */}
            <polyline points={knots(BAND_UPPER)} stroke="#9cc8e0" />
            <polyline points={knots(BAND_MIDDLE)} stroke="#9cc8e0" />
            <polyline points={knots(BAND_LOWER)} stroke="#9cc8e0" />
            <g strokeWidth="2" strokeLinejoin="round">
              <polyline points={knots(EMA_200)} stroke="#7b4422" />
              <polyline points={knots(EMA_SLOW)} stroke="#0c7a70" />
              <polyline points={perBar(EMA_MID)} stroke="#dd0a18" />
              <polyline points={perBar(EMA_FAST)} stroke="#0c0cc0" />
            </g>

            {/* trend lines */}
            <g stroke="#6e3f26">
              <line x1="13" y1="246" x2="1879" y2="491" />
              <line x1="935" y1="838" x2="1879" y2="645" />
              <line x1="1029" y1="820" x2="1525" y2="92" />
              <line x1="1437" y1="130" x2="1517" y2="372" />
              <line x1="1453" y1="114" x2="1517" y2="326" />
              <line x1="1253" y1="300" x2="1269" y2="395" />
              <line x1="1261" y1="278" x2="1269" y2="390" />
            </g>
            <line x1="1038" y1="820" x2="1094" y2="124" stroke="#c41a28" strokeDasharray="3 3" />
            <path d="M1853 267l7 8h-3v11h-8v-11h-3z" stroke="#e010e0" />
          </g>

          <g transform="translate(-13 -83)" fontSize="9" fill="#000">
            {FIBS.map((f) => (
              <text key={f.y} x="1596" y={f.y - 2} textAnchor="end" className="whitespace-pre">
                {f.text}
              </text>
            ))}
          </g>
          <g fontSize="9" fill="#000" textAnchor="end">
            <text x="100%" dx="-1" y="252" className="whitespace-pre">{'38.2  1.64495'}</text>
            <text x="100%" dx="-1" y="580" className="whitespace-pre">{'23.6  1.53366'}</text>
          </g>
          <g transform="translate(-13 -83)" fontSize="21" fill="#f00af0" className={FONT_LABEL}>
            <text x="1489" y="160">weekly support trend line</text>
            <text x="1817" y="226">1.68</text>
            <text x="1683" y="300">Monthly 200 EMA</text>
            <text x="1536" y="444">major triangle trend line</text>
          </g>
        </svg>

        <div className={`absolute left-[3px] top-0.5 flex items-center gap-1.5 text-[9px] text-black ${FONT_CHART}`}>
          <Caret />
          <span className="whitespace-pre">GBPUSD,Weekly  1.65910 1.66432 1.62823 1.63252</span>
        </div>
        <SignalPanel />
        <div className={`absolute bottom-1 left-1 text-[11px] leading-4 text-[#8c8c8c] ${FONT_LABEL}`}>
          Weekly Pivots | © CompassFX
        </div>
      </div>

      <svg width="40" height="757" className={`shrink-0 ${FONT_CHART}`} fontSize="9">
        <g transform="translate(0 -82)">
          {PRICE_TICKS.map((price, i) => (
            <g key={i}>
              <rect y={tickY(i)} width="3" height="1" fill="#000" />
              <text x="5" y={tickY(i) + 3} fill="#000">{price}</text>
            </g>
          ))}
          {LEVELS.map((l) => (
            <g key={l.price}>
              <rect x="1" y={l.y - 6} width="39" height="11" fill={l.tag} />
              <text x="5" y={l.y + 3} fill="#fff">{l.price}</text>
            </g>
          ))}
        </g>
      </svg>
    </div>
  )
}

function AdxChart() {
  return (
    <div className="mt-px flex">
      <div className="relative h-[148px] min-w-0 flex-1 overflow-hidden border border-black bg-white">
        <svg width="100%" height="146" className="block">
          <g transform="translate(-13 -841)" shapeRendering="crispEdges" fill="none">
            <Grid top={841} bottom={987} rows={[845, 879, 914, 950]} />
            <YearLines top={841} bottom={987} />
            <polyline points={perBar(PLUS_DI)} stroke="#2fa838" />
            <polyline points={perBar(MINUS_DI)} stroke="#e01020" />
            <polyline points={perBar(ADX)} stroke="#000" />
            <line x1="13" x2="4000" y1="928" y2="928" stroke="#a01822" />
          </g>
        </svg>
        <div className={`absolute left-1 top-0.5 text-[9px] text-black ${FONT_CHART}`}>ADX(14) 39.4905 +DI:7.9921 -DI:38.6906</div>
      </div>
      <svg width="40" height="148" className={`shrink-0 ${FONT_CHART}`} fontSize="9">
        <g transform="translate(0 -840)">
          {[842, 879, 914, 950, 986].map((y) => (
            <rect key={y} y={y} width="3" height="1" fill="#000" />
          ))}
          <text x="4" y="851">44</text>
          <text x="4" y="890">34</text>
          <text x="4" y="924">24</text>
          <text x="4" y="962">14</text>
          <text x="4" y="984">4</text>
          <rect x="1" y="922" width="39" height="11" fill="#b01c2c" />
          <text x="2" y="931" fill="#fff">20.00000</text>
        </g>
      </svg>
    </div>
  )
}

function DateAxis() {
  return (
    <div className={`flex h-[19px] overflow-hidden text-[9px] text-black ${FONT_CHART}`}>
      {DATES.map((d) => (
        <span key={d} className="w-16 shrink-0 whitespace-nowrap">
          <span className="ml-px block h-[3px] w-px bg-black" />
          {d}
        </span>
      ))}
    </div>
  )
}

function ChartTabs() {
  return (
    <div className="flex h-5 overflow-hidden border-t border-black bg-[#f0f0f0] pl-px text-[10px] leading-4 text-[#707070]">
      <div className="flex min-w-0 flex-1 overflow-hidden">
        {TABS.map((tab, i) => (
          <button
            key={i}
            type="button"
            className={
              i === ACTIVE_TAB
                ? 'h-[18px] shrink-0 border-x border-b border-black bg-white px-2.5 text-black'
                : `h-[18px] shrink-0 px-3 ${i === ACTIVE_TAB - 1 ? '' : 'border-r border-[#8a8a8a]'}`
            }
          >
            {tab}
          </button>
        ))}
        <button type="button" className="h-[18px] shrink-0 pl-1.5">GE</button>
      </div>
      <div className="flex w-7 shrink-0 items-center justify-between px-1">
        <button type="button" aria-label="Scroll tabs left">
          <svg width="4" height="7" viewBox="0 0 4 7"><path d="M4 0v7L0 3.5z" fill="#aaa" /></svg>
        </button>
        <button type="button" aria-label="Scroll tabs right">
          <svg width="4" height="7" viewBox="0 0 4 7"><path d="M0 0v7l4-3.5z" fill="#000" /></svg>
        </button>
      </div>
    </div>
  )
}

function StatusBar() {
  const cell = 'flex h-[18px] shrink-0 items-center border-l border-[#c4c4c4] pl-1.5'
  return (
    <footer className="flex h-[21px] items-center whitespace-nowrap bg-[#f0f0f0] pt-1 text-[10px] text-black">
      <span className="flex-1 pl-0.5 text-[11px]">For Help, press F1</span>
      <span className={`${cell} w-[116px]`}>Default</span>
      <span className={`${cell} w-[102px]`}>2011.02.06 00:00</span>
      <span className={`${cell} w-[72px]`}>O: 1.60980</span>
      <span className={`${cell} w-[70px]`}>H: 1.61830</span>
      <span className={`${cell} w-[69px]`}>L: 1.59610</span>
      <span className={`${cell} w-[70px]`}>C: 1.59990</span>
      <span className={`${cell} w-[66px]`}>V: 273429</span>
      <span className={`${cell} w-[157px] gap-9`}>
        <svg width="24" height="12" viewBox="0 0 24 12" shapeRendering="crispEdges">
          {Array.from({ length: 8 }, (_, i) => (
            <g key={i}>
              <rect x={i * 3} y="0" width="2" height={12 - i} fill="#6f8a1c" />
              <rect x={i * 3} y={12 - i} width="2" height={i} fill="#a5281c" />
            </g>
          ))}
        </svg>
        337/3 kb
      </span>
    </footer>
  )
}

/* ---------- desktop taskbar ---------- */

function TaskButton({ label, state, children }: { label: string; state?: 'open' | 'active'; children: ReactNode }) {
  const frame =
    state === 'active'
      ? 'border border-[#e6d8df] bg-white/35'
      : state === 'open'
        ? 'border border-white/30 bg-white/15'
        : ''
  return (
    <button type="button" aria-label={label} className={`mr-1 flex h-[38px] w-[58px] shrink-0 items-center justify-center ${frame}`}>
      {children}
    </button>
  )
}

function Taskbar() {
  return (
    <div className="absolute inset-x-0 bottom-0 flex h-10 items-center border-t border-[#8f5f76] bg-[#6c2849]/48 text-white">
      <button type="button" aria-label="Start" className="flex h-full w-[52px] shrink-0 items-center justify-center">
        <svg width="26" height="26" viewBox="0 0 26 26" fill="#fff">
          <path d="M0 4l11-1.5V12H0zM12 2.3L26 0v12H12zM0 13h11v9.5L0 21zM12 13h14v13l-14-2z" />
        </svg>
      </button>
      <TaskButton label="Internet Explorer">
        <svg width="32" height="34" viewBox="0 0 32 34" fill="none">
          <path d="M26 19H11c0 7 9 8 11 3h5c-2 6-6 9-11 9C9 31 5 26 5 19S10 7 16 7s11 5 10 12z" fill="#3fb4f0" />
          <path d="M11 15c1-5 9-5 9 0z" fill="#84475f" />
          <path d="M3 32C-1 27 6 15 14 9S30-1 29 7c0 2-1 3-1 3 0-4-4-4-8-2C12 12 4 22 5 28c0 2 3 3 6 1-3 3-6 5-8 3z" fill="#f7c52c" />
        </svg>
      </TaskButton>
      <TaskButton label="File Explorer">
        <svg width="32" height="32" viewBox="0 0 32 32">
          <path d="M1 3h9l2 3h18v20H1z" fill="#e6bd52" />
          <path d="M3 2h6v4H3z" fill="#4aa04a" />
          <path d="M12 4h6v3h-6z" fill="#d84c34" />
          <path d="M2 8h28v18H2z" fill="#fbe698" />
          <path d="M5 19h22v11h-5v-6H10v6H5z" fill="#7cc3e8" />
        </svg>
      </TaskButton>
      <TaskButton label="Chrome" state="open">
        <svg width="30" height="30" viewBox="0 0 30 30">
          <circle cx="15" cy="15" r="14" fill="#f2c52e" />
          <path d="M15 15L2.9 8A14 14 0 0127.1 8z" fill="#dd4535" />
          <path d="M2.9 8A14 14 0 0014 29l5-11-4-3z" fill="#2f9e49" />
          <path d="M15 8h12.1L20 15z" fill="#dd4535" />
          <circle cx="15" cy="15" r="6.5" fill="#fff" />
          <circle cx="15" cy="15" r="5" fill="#3f7fe0" />
        </svg>
      </TaskButton>
      <TaskButton label="Calculator">
        <svg width="24" height="30" viewBox="0 0 24 30">
          <rect x="1" y="1" width="22" height="28" rx="1" fill="#dcebf8" stroke="#4f8fca" />
          <rect x="3" y="2" width="18" height="2" fill="#f2b36a" />
          <rect x="3" y="5" width="18" height="7" fill="#f4faff" stroke="#6ba3d4" />
          <rect x="16" y="7" width="2" height="4" fill="#3a76b0" />
          {Array.from({ length: 16 }, (_, i) => (
            <rect key={i} x={3 + (i % 4) * 5} y={14 + Math.floor(i / 4) * 4} width="3" height="2" fill={i === 15 ? '#e8803a' : '#5c9ad2'} />
          ))}
        </svg>
      </TaskButton>
      <TaskButton label="Firewall">
        <svg width="30" height="28" viewBox="0 0 30 28">
          <path d="M1 1l28 3v20L1 25z" fill="#5a5658" />
          <g fill="#bcbcba" stroke="#747272">
            <path d="M2 2l7 1v4L2 6zM11 3l8 1v4l-8-1zM21 4l7 1v4h-7zM4 8l8 1v4l-8-1zM14 9l8 1v4h-8zM2 14h7v4H2zM11 15h8v4h-8zM21 15h7v4h-7zM5 20h7v4H5zM15 20h8v3h-8z" />
          </g>
        </svg>
      </TaskButton>
      <TaskButton label="Go Trader MT4" state="active">
        <span className="flex h-8 w-[30px] items-center justify-center bg-[#2a302f] text-[16px] text-[#a8acab]">
          G<span className="text-[#1f8a5c]">O</span>
        </span>
      </TaskButton>
      <TaskButton label="Trading terminal" state="open">
        <svg width="32" height="32" viewBox="0 0 32 32" fill="none">
          <circle cx="16" cy="16" r="13.5" fill="#fbf3f3" stroke="#d8232f" strokeWidth="3" />
          <path d="M7 22l5-8 3 5 4-10 1 9 5-7" stroke="#d8232f" strokeWidth="3" />
        </svg>
      </TaskButton>
      <TaskButton label="Word" state="open">
        <svg width="30" height="30" viewBox="0 0 30 30">
          <rect x="14" y="4" width="15" height="23" fill="#fff" stroke="#2b579a" />
          <path d="M17 8h10M17 12h10M17 16h10M17 20h10M17 24h10" stroke="#2b579a" strokeWidth="2" />
          <path d="M0 3l17-3v30L0 27z" fill="#2b579a" />
          <text x="1" y="21" fontSize="15" fontWeight="700" fill="#fff">W</text>
        </svg>
      </TaskButton>

      <div className="ml-auto flex items-center text-[11px]">
        <svg width="30" height="18" viewBox="0 0 30 18" fill="none" className="mr-3.5">
          <rect x="1" y="1" width="28" height="16" fill="#4f2d3c" stroke="#fff" strokeWidth="2" />
          <path d="M4 5h22M4 9h22" stroke="#fff" strokeWidth="2" strokeDasharray="2 2" />
          <path d="M4 13h2M8 13h14M24 13h2" stroke="#fff" strokeWidth="2" />
        </svg>
        <svg width="8" height="5" viewBox="0 0 8 5" className="mr-3"><path d="M4 0l4 5H0z" fill="#fff" /></svg>
        <svg width="16" height="12" viewBox="0 0 16 12" fill="none" className="mr-2">
          <rect x="1" y="1" width="14" height="10" fill="#fff" />
          <path d="M3 3.5h10M3 8.5h4M9 8.5h4" stroke="#3a2630" strokeWidth="2" />
        </svg>
        <svg width="15" height="16" viewBox="0 0 15 16" fill="none" className="mr-2.5">
          <path d="M2 1v3M5 1v3M1 5h5v3H1zM3.5 8v6" stroke="#fff" />
          <rect x="8" y="3" width="5" height="12" stroke="#fff" strokeWidth="2" />
          <path d="M9 1h3" stroke="#fff" strokeWidth="2" />
        </svg>
        <svg width="16" height="12" viewBox="0 0 16 12" className="mr-2" fill="#fff">
          <path d="M0 10h2v2H0zM3 8h2v4H3zM6 6h2v6H6zM9 3h2v9H9zM12 0h2v12h-2z" />
        </svg>
        <svg width="14" height="14" viewBox="0 0 14 14" fill="none" className="mr-3.5">
          <path d="M1 5h2l4-4v12L3 9H1z" fill="#fff" />
          <path d="M9 4c2 2 2 4 0 6" stroke="#fff" />
        </svg>
        <span className="mr-[18px]">ENG</span>
        <div className="mr-[18px] text-center leading-4">
          <div>1:06 PM</div>
          <div>6/09/2014</div>
        </div>
      </div>
    </div>
  )
}

export default function App() {
  return (
    <div className={`relative flex min-h-screen flex-col overflow-hidden bg-[#343230] ${FONT_UI}`}>
      <div className="bg-[#c47a97] pb-2">
        <TitleBar />
        <main className="ml-2 bg-white">
          <MenuBar />
          <Toolbar />
          <div className="border-l border-[#8c8c8c] pl-[3px] pt-0.5">
            <PriceChart />
            <AdxChart />
            <DateAxis />
          </div>
          <ChartTabs />
          <StatusBar />
        </main>
      </div>
      <Taskbar />
    </div>
  )
}
